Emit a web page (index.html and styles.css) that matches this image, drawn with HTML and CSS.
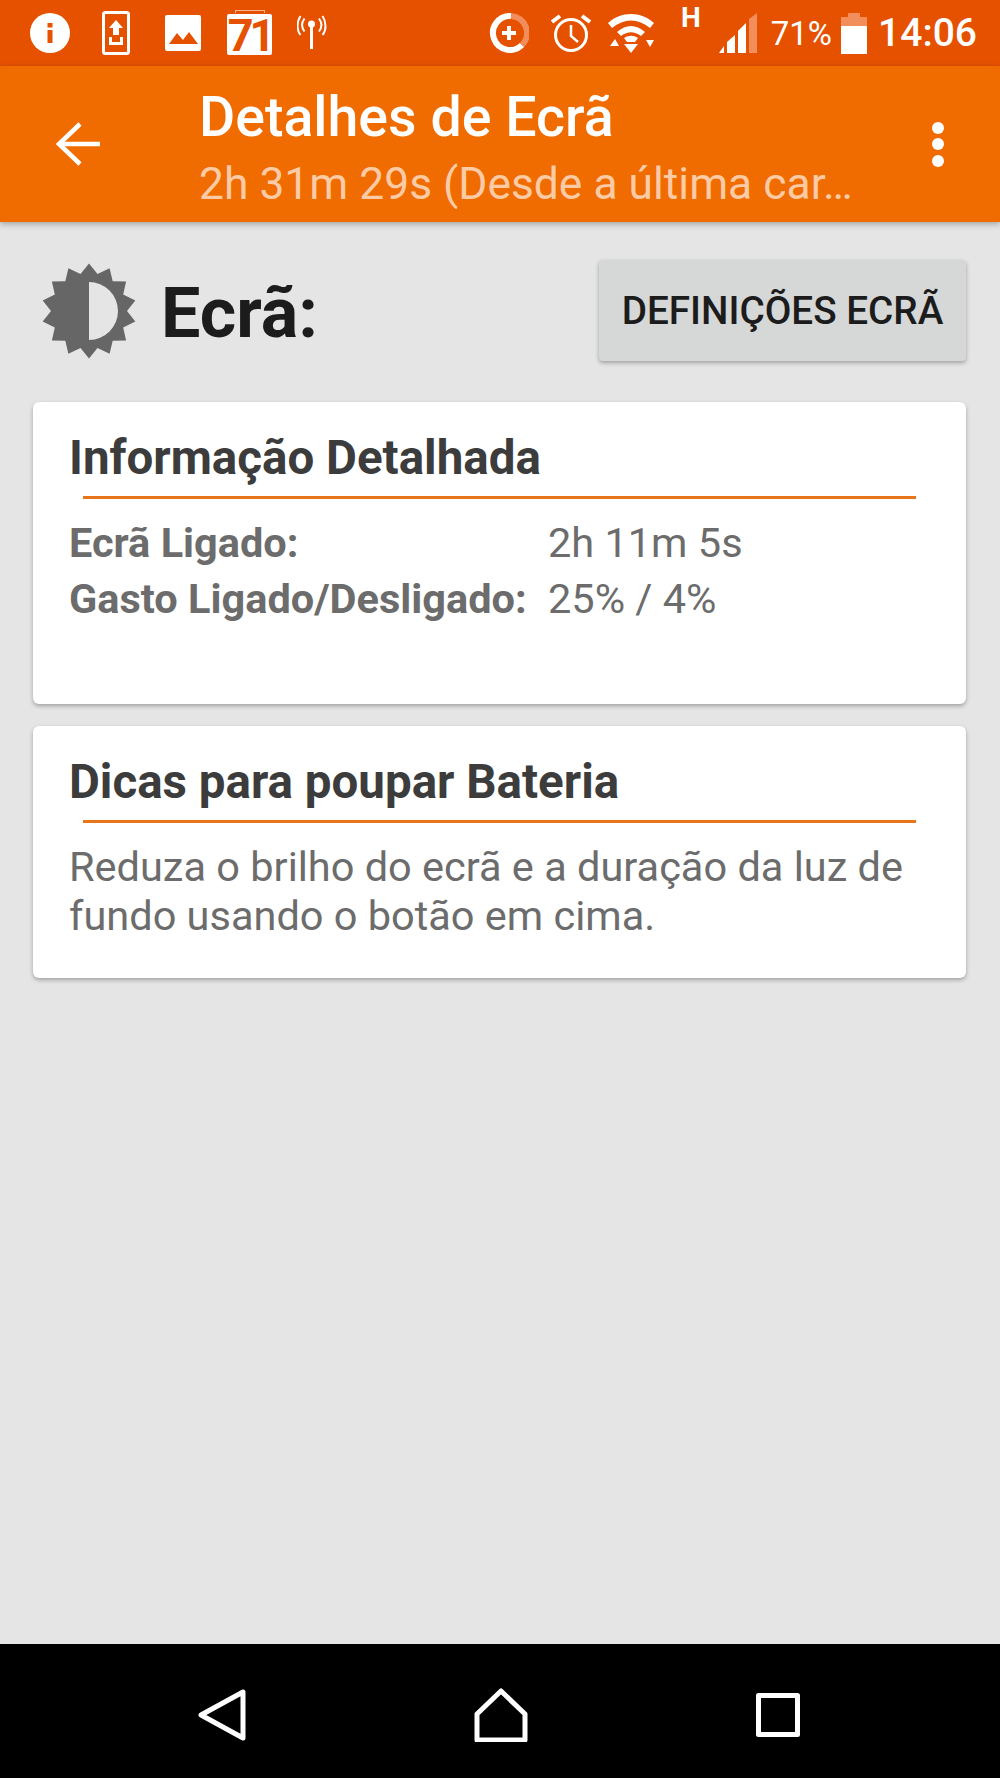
FILE: index.html
```html
<!DOCTYPE html>
<html>
<head>
    <title>Detalhes de Ecrã</title>
    <link rel="stylesheet" href="styles.css">
</head>
<body>
    <!-- Android status bar -->
    <div class="status-bar">
        <div class="status-group status-left">
            <svg width="40" height="40" viewBox="0 0 40 40"><circle cx="20" cy="20" r="20" fill="#fff"/><rect x="17.500" y="17" width="5" height="13" fill="#e65100"/><rect x="17.500" y="10" width="5" height="4.500" fill="#e65100"/></svg>
            <svg class="icon-upload" width="30" height="44" viewBox="0 0 30 44"><rect x="1.500" y="1.500" width="25" height="41" rx="2" fill="none" stroke="#fff" stroke-width="3"/><path d="M14 9l7 8h-4v7h-6v-7H7z" fill="#fff"/><path d="M7 26v8h14v-8h-3v5H10v-5z" fill="#fff"/></svg>
            <svg class="icon-picture" width="36" height="36" viewBox="0 0 36 36"><rect width="36" height="36" rx="2" fill="#fff"/><path d="M4 29l8-11 6 7 6-8 9 12z" fill="#e65100"/></svg>
            <div class="calendar-icon">71</div>
            <svg class="icon-antenna" width="30" height="36" viewBox="0 0 30 36" fill="none" stroke="#fff" stroke-width="2"><circle cx="14.500" cy="9" r="3.500" fill="#fff" stroke="none"/><path d="M14.500 11v23" stroke-width="3"/><path d="M7.500 3.500c-3 4-3 9 0 13M22 3.500c3 4 3 9 0 13"/><path d="M3.500 1c-4 6-4 14 0 19M25.500 1c4 6 4 14 0 19"/></svg>
        </div>
        <div class="status-group status-right">
            <svg class="icon-data" width="40" height="40" viewBox="0 0 40 40"><path d="M33 32a17 17 0 1 1-11-29" fill="none" stroke="#fff" stroke-width="6"/><path d="M22 3a17 17 0 0 1 11 29" fill="none" stroke="#f28d5c" stroke-width="6"/><path d="M18 13h4v5h5v4h-5v5h-4v-5h-5v-4h5z" fill="#fff"/></svg>
            <svg class="icon-alarm" width="40" height="40" viewBox="0 0 40 40" fill="none" stroke="#fff"><circle cx="20" cy="22" r="15.500" stroke-width="3"/><path d="M20 12v11l7 6" stroke-width="2.500"/><path d="M1 9l8-6M39 9l-8-6" stroke-width="4"/></svg>
            <svg class="icon-wifi" width="46" height="40" viewBox="0 0 46 40"><path d="M0 10C13-2 33-2 46 10l-4 5C30 5 16 5 4 15z" fill="#fff"/><path d="M9 19c9-8 19-8 28 0l-4 4c-7-5-13-5-20 0z" fill="#fff"/><path d="M16 25c5-3 9-3 14 0l-3 4h-8z" fill="#fff"/><path d="M23 40l-7-9h14z" fill="#fff"/><path d="M2 33l5-7 4 7zM38 27h8l-4 7z" fill="#fff"/></svg>
            <span class="network-type">H</span>
            <svg class="icon-signal" width="38" height="40" viewBox="0 0 38 40"><path d="M38 0v40h-8V6z" fill="#f28d5c"/><path d="M27 10v30h-8V18z" fill="#fff"/><path d="M16 22v18H8V29zM5 33v7H0z" fill="#fff"/></svg>
            <span class="battery-pct">71%</span>
            <svg class="icon-battery" width="26" height="41" viewBox="0 0 26 41"><path d="M7 0h12v4h7v11H0V4h7z" fill="#f28d5c"/><rect y="13" width="26" height="28" fill="#fff"/></svg>
            <span class="clock">14:06</span>
        </div>
    </div>

    <!-- App bar -->
    <div class="app-bar">
        <svg class="back-arrow" width="44" height="44" viewBox="0 0 44 44" fill="none" stroke="#fff" stroke-width="4.500"><path d="M44 22H3"/><path d="M24 2L3 22l21 20"/></svg>
        <div class="app-titles">
            <div class="app-title">Detalhes de Ecrã</div>
            <div class="app-subtitle">2h 31m 29s (Desde a última car…</div>
        </div>
        <div class="overflow-menu"><span></span><span></span><span></span></div>
    </div>

    <!-- Main content -->
    <div class="content">
        <div class="header-row">
            <div class="header-left">
                <svg class="sun-icon" width="96" height="96" viewBox="0 0 96 96"><path fill="#666" d="M48 .5L56.500 11 68.600 5.200 71.700 18.300 85.100 18.400 82.200 31.500 94.300 37.400 86 48 94.300 58.600 82.200 64.500 85.100 77.600 71.700 77.700 68.600 90.800 56.500 85 48 95.500 39.500 85 27.400 90.800 24.300 77.700 10.900 77.600 13.800 64.500 1.700 58.600 10 48 1.700 37.400 13.800 31.500 10.900 18.400 24.300 18.300 27.400 5.200 39.500 11z"/><path fill="#e5e5e5" d="M48 19a29 29 0 0 1 0 58z"/></svg>
                <span class="header-title">Ecrã:</span>
            </div>
            <button class="settings-button">DEFINIÇÕES ECRÃ</button>
        </div>

        <div class="card card-info">
            <div class="card-title">Informação Detalhada</div>
            <div class="card-rule"></div>
            <div class="info-grid">
                <span class="info-label">Ecrã Ligado:</span>
                <span class="info-value">2h 11m 5s</span>
                <span class="info-label">Gasto Ligado/Desligado:</span>
                <span class="info-value">25% / 4%</span>
            </div>
        </div>

        <div class="card card-tips">
            <div class="card-title">Dicas para poupar Bateria</div>
            <div class="card-rule"></div>
            <p class="card-text">Reduza o brilho do ecrã e a duração da luz de fundo usando o botão em cima.</p>
        </div>
    </div>

    <!-- Navigation bar -->
    <div class="nav-bar">
        <svg width="48" height="52" viewBox="0 0 48 52" fill="none" stroke="#fff" stroke-width="5" stroke-linejoin="round"><path d="M45 3v46L3 26z"/></svg>
        <svg width="54" height="54" viewBox="0 0 54 54" fill="none" stroke="#fff" stroke-width="5" stroke-linejoin="round"><path d="M27 3L3 26v26h48V26z"/></svg>
        <svg width="44" height="44" viewBox="0 0 44 44" fill="none" stroke="#fff" stroke-width="5" stroke-linejoin="round"><rect x="2.500" y="2.500" width="39" height="39"/></svg>
    </div>
</body>
</html>
```

FILE: styles.css
```css
/* Page frame */
body {
    margin: 0;
    width: 1000px;
    height: 1778px;
    display: flex;
    flex-direction: column;
    background-color: #e5e5e5;
    font-family: Roboto, "Liberation Sans", sans-serif;
    overflow: hidden;
}

/* Status bar */
.status-bar {
    height: 66px;
    flex-shrink: 0;
    display: flex;
    justify-content: space-between;
    background-color: #e65100;
    color: #fff;
    padding: 0 23px 0 30px;
}

.status-group {
    display: flex;
    align-items: center;
}

.icon-upload {
    margin-left: 32px;
}

.icon-picture {
    margin-left: 33px;
}

.calendar-icon {
    position: relative;
    width: 45px;
    height: 41px;
    margin: 3px 0 0 26px;
    background-color: #fff;
    color: #e65100;
    font-weight: 700;
    font-size: 45px;
    letter-spacing: -4px;
    line-height: 43px;
    text-align: center;
    border-radius: 2px;
}

/* Little tab on top of the calendar icon */
.calendar-icon::before {
    content: "";
    position: absolute;
    top: -4px;
    left: 8px;
    width: 28px;
    height: 2px;
    border: 1px solid #f7b48e;
    border-bottom: none;
}

.icon-antenna {
    margin-left: 25px;
}

.icon-alarm {
    margin-left: 22px;
}

.icon-wifi {
    margin-left: 17px;
}

.network-type {
    font-size: 28px;
    font-weight: 700;
    line-height: 28px;
    align-self: flex-start;
    margin: 4px 0 0 27px;
}

.icon-signal {
    margin-left: 18px;
}

.battery-pct {
    font-size: 33px;
    margin-left: 14px;
}

.icon-battery {
    margin-left: 9px;
}

.clock {
    font-size: 39px;
    font-weight: 500;
    margin-left: 11px;
}

/* App bar */
.app-bar {
    height: 156px;
    flex-shrink: 0;
    display: flex;
    align-items: center;
    background-color: #f06c00;
    box-shadow: 0 2px 6px rgba(0, 0, 0, 0.3);
    padding: 0 56px;
    position: relative;
}

.back-arrow {
    flex-shrink: 0;
}

.app-titles {
    flex: 1;
    margin-left: 99px;
    padding-top: 11px;
}

.app-title {
    color: #fff;
    font-size: 55.500px;
    font-weight: 500;
    line-height: 60px;
}

.app-subtitle {
    color: #fccba6;
    font-size: 44.400px;
    line-height: 56px;
    margin-top: 8px;
}

.overflow-menu {
    display: flex;
    flex-direction: column;
    gap: 4.500px;
}

.overflow-menu span {
    width: 12px;
    height: 12px;
    border-radius: 50%;
    background-color: #fff;
}

/* Content */
.content {
    flex: 1;
    padding: 38px 34px 0 33px;
}

.header-row {
    display: flex;
    justify-content: space-between;
    align-items: center;
    height: 101px;
}

.header-left {
    display: flex;
    align-items: center;
    gap: 24px;
    padding-left: 8px;
}

.header-title {
    font-size: 70px;
    font-weight: 700;
    color: #1c1c1c;
    padding-top: 4px;
}

.settings-button {
    width: 367px;
    height: 101px;
    border: none;
    border-radius: 4px;
    background-color: #d6d7d7;
    box-shadow: 0 2px 4px rgba(0, 0, 0, 0.3);
    color: #1c1c1c;
    font-family: inherit;
    font-size: 38.700px;
    font-weight: 500;
    padding: 0;
}

.card {
    background-color: #fff;
    border-radius: 6px;
    box-shadow: 0 2px 4px rgba(0, 0, 0, 0.3);
    padding: 28px 36px 0;
    box-sizing: border-box;
}

.card-info {
    height: 302px;
    margin-top: 41px;
}

.card-tips {
    height: 252px;
    margin-top: 22px;
}

.card-title {
    font-size: 47.500px;
    font-weight: 700;
    color: #3c3c3c;
    line-height: 56px;
}

.card-rule {
    width: 833px;
    height: 3px;
    margin: 10px 0 0 14px;
    background-color: #e8751a;
}

.info-grid {
    display: grid;
    grid-template-columns: 479px 1fr;
    row-gap: 8px;
    margin-top: 20px;
    font-size: 41.500px;
    line-height: 48px;
    color: #6c6c6c;
}

.info-label {
    font-weight: 700;
}

.card-text {
    margin: 19px 0 0;
    font-size: 41.500px;
    line-height: 49px;
    color: #6c6c6c;
}

/* Navigation bar */
.nav-bar {
    height: 134px;
    flex-shrink: 0;
    box-sizing: border-box;
    display: flex;
    align-items: center;
    justify-content: space-between;
    background-color: #000;
    padding: 8px 200px 0 198px;
}
```
